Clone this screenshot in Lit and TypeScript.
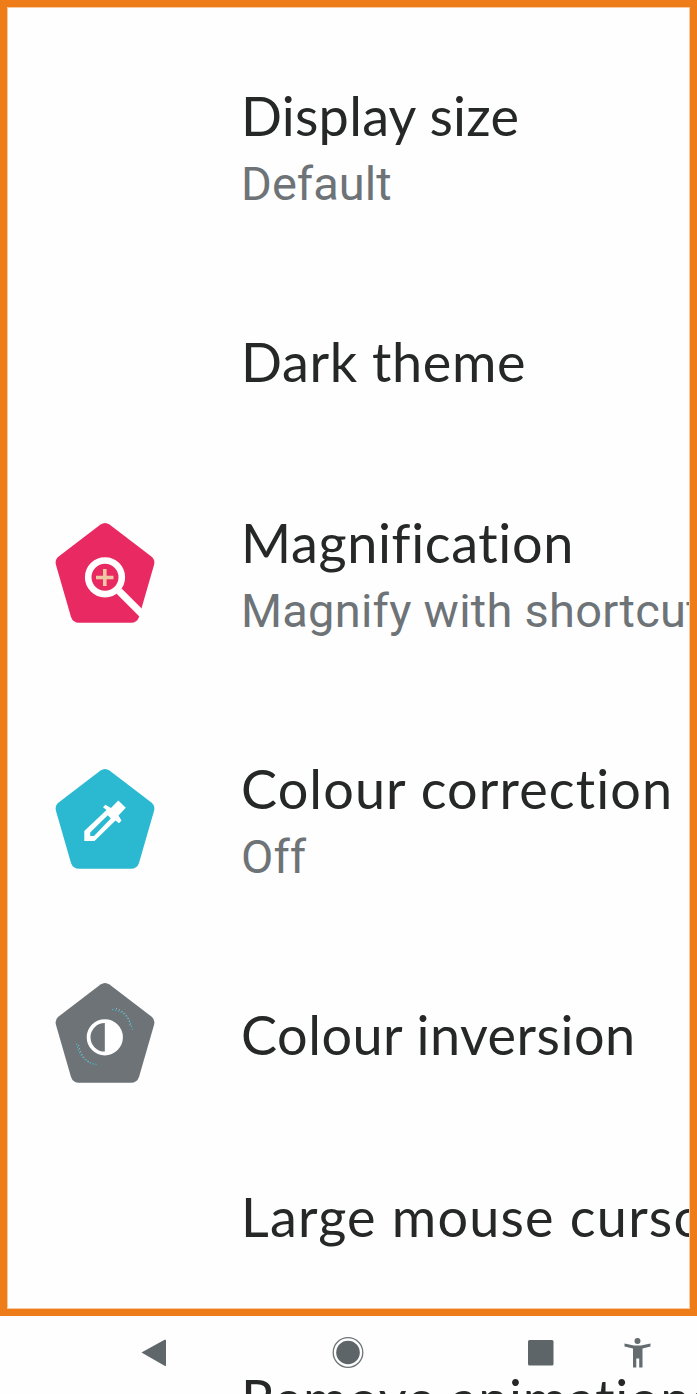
import { LitElement, html, svg, css, nothing } from "lit";
import { customElement } from "lit/decorators.js";

interface Row {
  title: string;
  summary?: string;
  icon?: "magnify" | "dropper" | "contrast";
  spacing: number;
  summarySpacing?: number;
}

const ROWS: Row[] = [
  { title: "Display size", summary: "Default", spacing: 0.25, summarySpacing: 0.05 },
  { title: "Dark theme", spacing: 0.6 },
  { title: "Magnification", summary: "Magnify with shortcut", icon: "magnify", spacing: 0.65, summarySpacing: 0.25 },
  { title: "Colour correction", summary: "Off", icon: "dropper", spacing: 1.1, summarySpacing: 0.05 },
  { title: "Colour inversion", icon: "contrast", spacing: 0.5 },
  { title: "Large mouse cursor", spacing: 1.2 },
  { title: "Remove animations", spacing: 0.75 },
];

const PENTAGON =
  "M45.5 1.5Q50 -1.6 54.5 1.5L97 34Q100.3 37 99 42L84 94Q82 99.8 76 99.8H24Q18 99.8 16 94L1 42Q-.3 37 3 34Z";

const ICONS = {
  magnify: svg`
    <path d=${PENTAGON} fill="#e92a62"/>
    <circle cx="50" cy="54.3" r="16.8" fill="none" stroke="#fff" stroke-width="6.6"/>
    <path d="M64 68L88 92" stroke="#fff" stroke-width="7.4"/>
    <path d="M41 54.5H58.5M49.8 46V63" stroke="#edc8a2" stroke-width="3.6"/>`,
  dropper: svg`
    <path d=${PENTAGON} fill="#2bb9d1"/>
    <path fill="#fff" fill-rule="evenodd" d="M29.3 72V62L51.5 41L48 38.3L50.3 35.8L56 39L63.3 31.5L70.8 38.8L63.5 46.5L66.5 51.5L64 54.2L60.5 51.5L39.5 72ZM35.2 63.5V67H39L55.8 49.5L52.8 46.3Z"/>`,
  contrast: svg`
    <path d=${PENTAGON} fill="#6d7376"/>
    <circle cx="49.8" cy="54.3" r="16.2" fill="none" stroke="#fff" stroke-width="3.8"/>
    <path d="M49.8 38.3A16 16 0 0 1 49.8 70.3Z" fill="#fff"/>
    <path d="M57 26.5Q73 28 77.5 46.5M21.5 60.5Q26 80 41.5 81.3" fill="none" stroke="#38c0d4" stroke-width="1.2" stroke-dasharray="1.2 1.8"/>
    <path d="M61 25.5Q75 30 75 44M23.5 62Q27 76 36 80" fill="none" stroke="#c5cbcd" stroke-width="1" stroke-dasharray="1 2.2"/>`,
};

@customElement("app-root")
export class AppRoot extends LitElement {
  static styles = css`
    :host {
      display: block;
      position: relative;
      width: 697px;
      height: 1394px;
      overflow: hidden;
      background: #fefefe;
    }
    .list {
      display: flex;
      flex-direction: column;
      padding-top: 23px;
    }
    .row {
      display: grid;
      grid-template-columns: 100px auto;
      column-gap: 86px;
      align-items: center;
      padding-left: 55px;
      min-height: 182px;
      box-sizing: border-box;
      white-space: nowrap;
    }
    .row.tall {
      min-height: 245.5px;
    }
    .icon {
      display: block;
      width: 100px;
      height: 100px;
      overflow: visible;
    }
    .text {
      grid-column: 2;
      padding-top: 4px;
    }
    .title {
      font: 400 54px/64px Lato, sans-serif;
      font-variant-ligatures: none;
      color: #262828;
    }
    .summary {
      font: 400 47px/64px Roboto, sans-serif;
      color: #6d7376;
      padding-top: 4px;
      margin-bottom: -4px;
    }
    .frame {
      position: absolute;
      inset: 0 0 auto 0;
      height: 1316px;
      box-sizing: border-box;
      border: 7px solid #ee7c18;
      box-shadow: inset 0 0 0 1px #f8c9a0;
    }
    .nav {
      position: absolute;
      inset: auto 0 18px 0;
      height: 60px;
    }
    .nav svg {
      display: block;
    }
  `;

  render() {
    return html`
      <div class="list">
        ${ROWS.map(
          (r) => html`
            <div class="row ${r.summary ? "tall" : ""}">
              ${r.icon
                ? html`<svg class="icon" viewBox="0 0 100 100">${ICONS[r.icon]}</svg>`
                : nothing}
              <div class="text">
                <div class="title"><span style="letter-spacing:${r.spacing}px">${r.title}</span></div>
                ${r.summary
                  ? html`<div class="summary"><span style="letter-spacing:${r.summarySpacing}px">${r.summary}</span></div>`
                  : nothing}
              </div>
            </div>
          `
        )}
      </div>
      <div class="frame"></div>
      <div class="nav">
        <svg width="697" height="60" viewBox="0 1316 697 60">
          <path d="M141.5 1352.5L165 1339.5Q166 1339.5 166 1341V1365Q166 1366.5 165 1366Z" fill="#5f676a"/>
          <circle cx="348" cy="1352.5" r="14.8" fill="none" stroke="#6d7376" stroke-width="1.3"/>
          <circle cx="348" cy="1352.5" r="11.8" fill="#5d6568"/>
          <rect x="528" y="1340" width="25.5" height="25.5" rx="1.5" fill="#5d6568"/>
          <circle cx="637.5" cy="1341" r="3" fill="#646c6f"/>
          <path fill="#646c6f" d="M624.5 1343.5L634 1345.5H641L650.5 1343.5V1346.5L642.5 1348.5V1367.5H639.2V1358.5H636.3V1367.5H633V1348.5L624.5 1346.5Z"/>
        </svg>
      </div>
    `;
  }
}
